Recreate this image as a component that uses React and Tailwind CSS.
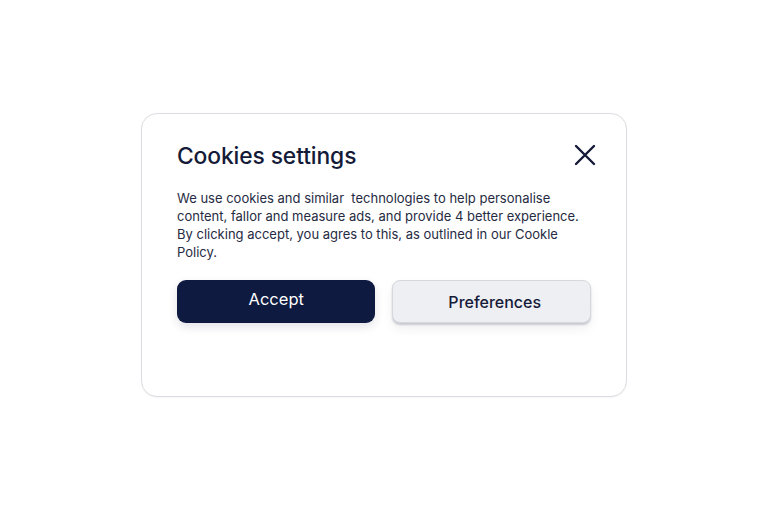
import React from "react";

export default function App() {
  return (
    <div className="w-[768px] h-[512px] bg-white flex items-start justify-center pt-[113px]" style={{ fontFamily: "Inter, 'Noto Sans', sans-serif" }}>
      <div className="w-[486px] h-[284px] rounded-[16px] border border-[#dcdde2] bg-white px-[35px] pt-[28px] shadow-[0_1px_2px_rgba(0,0,0,0.04)]">
        <div className="flex items-center justify-between">
          <h1 className="text-[22.8px] leading-[28px] font-medium text-[#141a38] tracking-[-0.1px]">Cookies settings</h1>
          <svg width="22" height="22" viewBox="0 0 22 22" className="mr-[-5px] mt-[-3px]">
            <path d="M2 2 L20 20 M20 2 L2 20" stroke="#141a38" strokeWidth="2.4" strokeLinecap="round" />
          </svg>
        </div>
        <p className="mt-[19px] text-[13px] leading-[18px] text-[#262b42] whitespace-nowrap">
          We use cookies and similar&nbsp; technologies to help personalise<br />
          content, fallor and measure ads, and provide 4 better experience.<br />
          By clicking accept, you agres to this, as outlined in our Cookle<br />
          Policy.
        </p>
        <div className="mt-[19px] flex gap-[17px]">
          <button className="w-[199px] h-[43px] rounded-[9px] bg-[#0e1a3f] text-white text-[16.5px] shadow-[0_4px_10px_rgba(15,26,63,0.12)] pb-[4px]">Accept</button>
          <button className="w-[199px] h-[43px] rounded-[8px] bg-[#eeeff3] border border-[#d6d8de] text-[#141a38] text-[16px] font-medium pl-[6px] shadow-[0_2px_2px_rgba(120,125,150,0.35),0_6px_12px_rgba(0,0,0,0.06)]">Preferences</button>
        </div>
      </div>
    </div>
  );
}
